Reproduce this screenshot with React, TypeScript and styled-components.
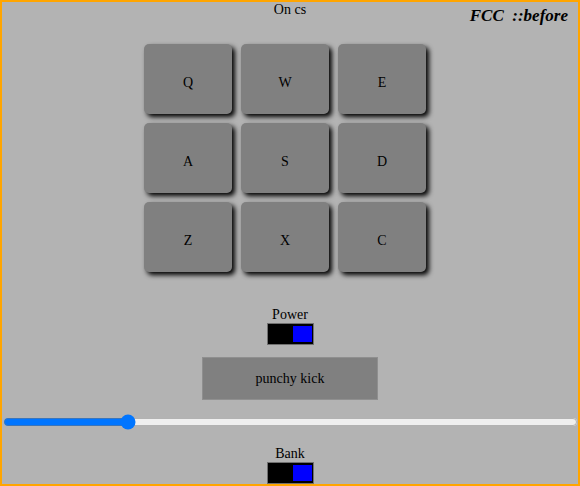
import React, { useState } from 'react'
import styled, { createGlobalStyle } from 'styled-components'

const GlobalStyle = createGlobalStyle`
  html, body {
    margin: 0;
    padding: 0;
  }
  body {
    font-family: "Liberation Serif", "Times New Roman", serif;
    font-size: 14px;
    color: #000;
  }
`

const Machine = styled.div`
  position: relative;
  box-sizing: border-box;
  width: 580px;
  height: 486px;
  border: 2px solid orange;
  background: #b3b3b3;
  display: flex;
  flex-direction: column;
  align-items: center;
  overflow: hidden;
`

const Status = styled.div`
  line-height: 16px;
`

const Brand = styled.div`
  position: absolute;
  top: 4px;
  right: 10px;
  font-size: 17px;
  font-weight: bold;
  font-style: italic;
  white-space: pre;
`

const PadGrid = styled.div`
  margin-top: 26px;
  width: 292px;
  display: grid;
  grid-template-columns: repeat(3, 88px);
  grid-auto-rows: 70px;
  gap: 9px;
`

const Pad = styled.div`
  box-sizing: border-box;
  padding-top: 8px;
  display: flex;
  align-items: center;
  justify-content: center;
  background: #808080;
  border-radius: 5px;
  box-shadow: 3px 3px 5px #000;
  cursor: pointer;
`

const Group = styled.div<{ top: number }>`
  margin-top: ${({ top }) => top}px;
  display: flex;
  flex-direction: column;
  align-items: center;
`

const Label = styled.div`
  line-height: 16px;
`

const Toggle = styled.div`
  box-sizing: border-box;
  width: 47px;
  height: 22px;
  padding: 1px 1px 1px;
  border: 1px solid #707070;
  background: #000;
  display: flex;
  justify-content: flex-end;
  align-items: center;
  cursor: pointer;
`

const Knob = styled.div`
  width: 19px;
  height: 16px;
  background: blue;
`

const Display = styled.div`
  box-sizing: border-box;
  margin-top: 12px;
  width: 176px;
  height: 43px;
  border: 1px solid #8f8f8f;
  background: #808080;
  display: flex;
  align-items: center;
  justify-content: center;
`

const Volume = styled.input`
  align-self: flex-start;
  width: 575px;
  height: 16px;
  margin: 14px 0 0 1px;
  padding: 0;
`

const keys = ['Q', 'W', 'E', 'A', 'S', 'D', 'Z', 'X', 'C']

export default function App() {
  const [volume, setVolume] = useState(0.21)
  return (
    <>
      <GlobalStyle />
      <Machine>
        <Status>On cs</Status>
        <Brand>FCC  ::before</Brand>
        <PadGrid>
          {keys.map(k => (
            <Pad key={k}>{k}</Pad>
          ))}
        </PadGrid>
        <Group top={35}>
          <Label>Power</Label>
          <Toggle>
            <Knob />
          </Toggle>
        </Group>
        <Display>punchy kick</Display>
        <Volume
          type="range"
          min={0}
          max={1}
          step={0.01}
          value={volume}
          onChange={e => setVolume(Number(e.target.value))}
        />
        <Group top={16}>
          <Label>Bank</Label>
          <Toggle>
            <Knob />
          </Toggle>
        </Group>
      </Machine>
    </>
  )
}
